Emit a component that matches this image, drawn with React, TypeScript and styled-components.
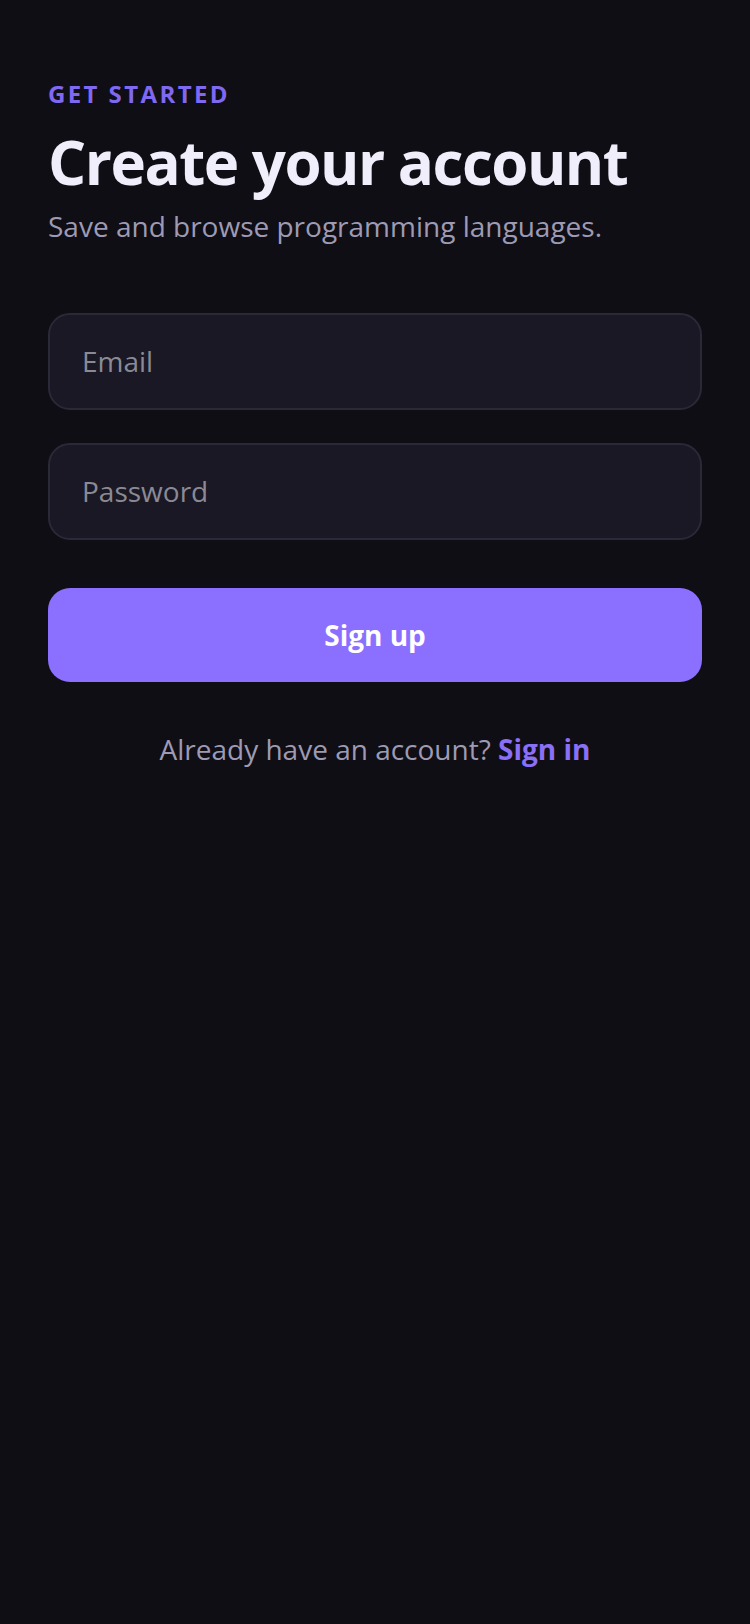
import styled, { createGlobalStyle } from "styled-components";

const GlobalStyle = createGlobalStyle`
  html, body {
    margin: 0;
    padding: 0;
    background: #0f0e15;
  }
  body {
    font-family: "Open Sans", "Noto Sans", sans-serif;
    -webkit-font-smoothing: antialiased;
  }
  * {
    box-sizing: border-box;
  }
`;

const Page = styled.main`
  min-height: 1624px;
  padding: 80px 48px 48px;
  display: flex;
  flex-direction: column;
  background: #0f0e15;
`;

const Eyebrow = styled.div`
  font-size: 24px;
  line-height: 1.2;
  font-weight: 700;
  letter-spacing: 2.4px;
  text-transform: uppercase;
  color: #7f68f2;
`;

const Title = styled.h1`
  margin: 19px 0 0;
  font-size: 60px;
  line-height: 1.15;
  font-weight: 700;
  letter-spacing: -1.5px;
  color: #f1eefb;
`;

const Subtitle = styled.p`
  margin: 10px 0 0;
  font-size: 28px;
  line-height: 1.4;
  color: #9e9ab3;
`;

const Form = styled.form`
  margin-top: 67px;
  display: flex;
  flex-direction: column;
  gap: 33px;
`;

const Field = styled.input`
  height: 97px;
  width: 100%;
  padding: 0 32px;
  border: 2px solid #2a2937;
  border-radius: 22px;
  background: #191824;
  font-family: inherit;
  font-size: 28px;
  color: #f1eefb;
  outline: none;

  &::placeholder {
    color: #8b8a94;
  }
`;

const Submit = styled.button`
  margin-top: 15px;
  height: 94px;
  border: none;
  border-radius: 22px;
  background: #8b6fff;
  color: #ffffff;
  font-family: inherit;
  font-size: 28px;
  font-weight: 700;
  cursor: pointer;
`;

const Footer = styled.p`
  margin: 48px 0 0;
  text-align: center;
  font-size: 28px;
  line-height: 1.4;
  color: #9e9ab3;
`;

const Link = styled.a`
  font-weight: 700;
  color: #8a6ff7;
  text-decoration: none;
`;

function App() {
  return (
    <>
      <GlobalStyle />
      <Page>
        <Eyebrow>Get started</Eyebrow>
        <Title>Create your account</Title>
        <Subtitle>Save and browse programming languages.</Subtitle>
        <Form onSubmit={(e) => e.preventDefault()}>
          <Field type="email" placeholder="Email" />
          <Field type="password" placeholder="Password" />
          <Submit type="submit">Sign up</Submit>
        </Form>
        <Footer>
          Already have an account? <Link href="#">Sign in</Link>
        </Footer>
      </Page>
    </>
  );
}

export default App;
